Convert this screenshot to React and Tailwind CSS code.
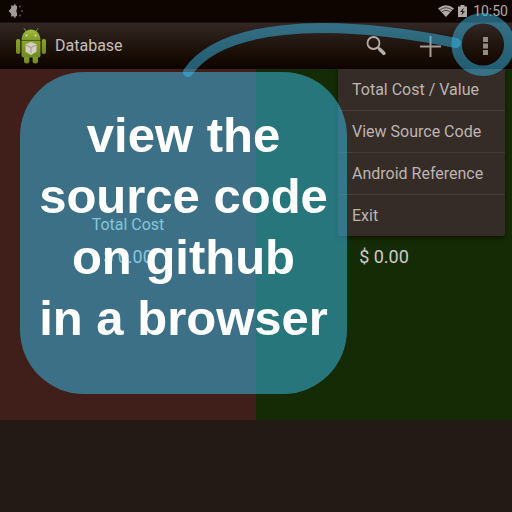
const ROBOTO = 'font-[Roboto,"Noto_Sans",sans-serif]';

function StatusBar() {
  return (
    <div className="flex h-[22px] items-center justify-between bg-[#0e0400] pr-1 pl-2">
      <svg className="size-4" viewBox="0 0 16 16" aria-label="Brightness">
        <path d="M9 3V13Q8.300 13.200 7.800 13.300L7 15.500 5.600 13.200 3 13.500 3.300 11 .6 8 3.300 5 3 2.500 5.600 2.800 7 .5 7.800 2.700Q8.300 2.800 9 3Z" fill="#a39b97" />
        <path d="M9.500 5Q7.200 8 9.500 11Z" fill="#0e0400" />
        <g fill="#5d5551">
          <circle cx="12" cy="3.500" r="1" />
          <circle cx="14" cy="8" r="1" />
          <circle cx="12" cy="12.500" r="1" />
        </g>
      </svg>
      <div className="flex items-center gap-1">
        <svg className="h-3 w-4" viewBox="0 0 16 12" aria-label="Wi-Fi">
          <path d="M0 3.500Q8-3 16 3.500L8 12Z" fill="#b0a9a5" />
          <path d="M1.500 5.200Q8 .2 14.500 5.200M3.500 7.200Q8 3.600 12.500 7.200" fill="none" stroke="#0e0400" strokeWidth=".6" />
        </svg>
        <svg className="h-3 w-[9px]" viewBox="0 0 9 12" aria-label="Battery">
          <path d="M0 1.500h2.500V0h4v1.500H9V12H0Z" fill="#b0a9a5" />
          <path d="M5.800 2.800 2 7h2.300L3.500 10.400 7 6.200H4.800Z" fill="#2a201c" />
        </svg>
        <span className="ml-0.5 text-sm leading-4 text-[#b0a9a5]">10:50</span>
      </div>
    </div>
  );
}

function AndroidLogo() {
  return (
    <svg className="h-9 w-8" viewBox="0 0 32 36" aria-hidden="true">
      <defs>
        <linearGradient id="head" x1="0" y1="0" x2="0" y2="1">
          <stop offset="0" stopColor="#a3bd3a" />
          <stop offset="1" stopColor="#7e992a" />
        </linearGradient>
        <linearGradient id="body" x1="0" y1="0" x2="0" y2="1">
          <stop offset="0" stopColor="#8aa52c" />
          <stop offset="1" stopColor="#6f8a22" />
        </linearGradient>
      </defs>
      <path d="M11 3.500 9.200.600M21 3.500l1.800-2.900" stroke="#7f9830" strokeWidth="1" strokeLinecap="round" />
      <path d="M6.500 12C7-2 25-2 25.500 12Z" fill="url(#head)" />
      <circle cx="11.500" cy="7.500" r="1" fill="#ded9c8" />
      <circle cx="20.500" cy="7.500" r="1" fill="#ded9c8" />
      <g fill="url(#body)">
        <rect x="1" y="11" width="4.300" height="15" rx="2" />
        <rect x="26.700" y="11" width="4.300" height="15" rx="2" />
        <rect x="9" y="26" width="5.400" height="9.500" rx="2.500" />
        <rect x="17.600" y="26" width="5.400" height="9.500" rx="2.500" />
        <path d="M6.500 12.400h19v15.100q0 2-2 2h-15q-2 0-2-2Z" />
      </g>
      <path d="m16 14 5.500 2.300v7.400L16 27l-5.500-3.300v-7.400Z" fill="#d3cfc2" />
      <path d="m11 17.200 5 2.300 5-2.300M16 19.500V25" fill="none" stroke="#9d978a" strokeWidth="1" />
    </svg>
  );
}

function ActionBar() {
  return (
    <header className="flex h-[47px] items-center border-t border-[#1d1512] bg-linear-to-b from-[#322723] to-[#0e0400] pl-[15px]">
      <AndroidLogo />
      <h1 className="ml-2 flex-1 text-base text-[#c6bfbb]">Database</h1>
      <button type="button" aria-label="Search" className="flex w-[54px] justify-center">
        <svg className="size-5" viewBox="0 0 20 20" fill="none" stroke="#b5adaa">
          <circle cx="7.500" cy="7" r="6" strokeWidth="1.800" />
          <path d="m11.800 11.300 2 2" strokeWidth="2" />
          <path d="m14 13.500 3.800 3.800" strokeWidth="3.600" strokeLinecap="round" />
        </svg>
      </button>
      <button type="button" aria-label="Add" className="flex w-[55px] justify-center">
        <svg className="size-[21px]" viewBox="0 0 21 21" stroke="#a39b97" strokeWidth="2">
          <path d="M10.500 0v21M0 10.500h21" />
        </svg>
      </button>
      <button type="button" aria-label="More options" className="flex w-[54px] justify-center">
        <svg className="h-[18px] w-[5px]" viewBox="0 0 5 18" fill="#948b87">
          <path d="M0 0h5v5H0ZM0 6.500h5v5H0ZM0 13h5v5H0Z" />
        </svg>
      </button>
    </header>
  );
}

function Total({ label, value, tone }) {
  return (
    <section className={`flex flex-1 flex-col items-center justify-center pb-1 text-[#d0cac6] ${tone}`}>
      <h2 className="text-base leading-5">{label}</h2>
      <p className="mt-2 text-lg leading-7">{value}</p>
    </section>
  );
}

const MENU = ["Total Cost / Value", "View Source Code", "Android Reference", "Exit"];

function OverflowMenu() {
  return (
    <nav className="absolute top-[69px] right-[7px] w-[167px] divide-y divide-[#453b37] rounded-b-xs bg-[#352b27] shadow-[0_2px_5px_rgba(0,0,0,0.5)]">
      {MENU.map((item) => (
        <button key={item} type="button" className="block h-[42px] w-full px-3.5 text-left text-base text-[#bdb5b1] last:h-[41px]">
          {item}
        </button>
      ))}
    </nav>
  );
}

function Callout() {
  return (
    <>
      <svg className="pointer-events-none absolute top-0 right-0 h-20 w-[330px]" viewBox="182 0 330 80" fill="none" stroke="#38b8e8" strokeOpacity=".5">
        <path d="M188 72C220 26 320 16 456 43" strokeWidth="10" strokeLinecap="round" />
        <circle cx="483" cy="44.500" r="26.300" strokeWidth="10.500" />
      </svg>
      <aside className="absolute top-[72px] left-5 h-[322px] w-[327px] rounded-[64px] bg-[#38c2f3]/50 pt-[33px] text-center font-['Liberation_Sans',Arial,sans-serif] text-[49px] leading-[61px] font-bold text-white">
        view the
        <br />
        source code
        <br />
        on github
        <br />
        in a browser
      </aside>
    </>
  );
}

export default function App() {
  return (
    <div className={`relative flex min-h-screen flex-col overflow-hidden bg-[#231a16] ${ROBOTO}`}>
      <StatusBar />
      <ActionBar />
      <main className="flex h-[351px]">
        <Total label="Total Cost" value="$ 0.00" tone="bg-[#401e19]" />
        <Total label="Total Value" value="$ 0.00" tone="bg-[#152b05]" />
      </main>
      <OverflowMenu />
      <Callout />
    </div>
  );
}
